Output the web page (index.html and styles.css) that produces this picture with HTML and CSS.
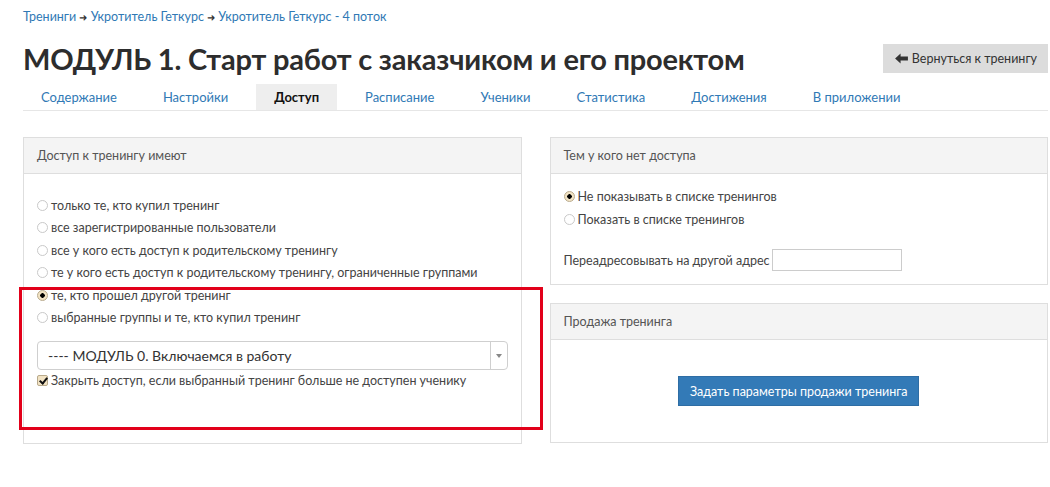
FILE: index.html
```html
<!DOCTYPE html>
<html lang="ru">
<head>
  <meta charset="UTF-8">
  <title>Доступ - МОДУЛЬ 1</title>
  <link rel="stylesheet" href="styles.css">
</head>
<body>
  <div class="page">
    <div class="breadcrumbs">
      <a href="#">Тренинги</a> <span class="sep">&#10140;</span>
      <a href="#">Укротитель Геткурс</a> <span class="sep">&#10140;</span>
      <a href="#">Укротитель Геткурс - 4 поток</a>
    </div>

    <div class="page-header">
      <h1>МОДУЛЬ 1. Старт работ с заказчиком и его проектом</h1>
      <a href="#" class="btn-back">
        <svg class="icon-back" viewBox="0 0 14 12" width="13" height="11"><path d="M0 6 L6 0.5 L6 3.8 L14 3.8 L14 8.2 L6 8.2 L6 11.5 Z" fill="#333"/></svg>
        Вернуться к тренингу
      </a>
    </div>

    <div class="tabs">
      <a href="#" class="tab">Содержание</a>
      <a href="#" class="tab">Настройки</a>
      <a href="#" class="tab active">Доступ</a>
      <a href="#" class="tab">Расписание</a>
      <a href="#" class="tab">Ученики</a>
      <a href="#" class="tab">Статистика</a>
      <a href="#" class="tab">Достижения</a>
      <a href="#" class="tab">В приложении</a>
    </div>

    <div class="columns">
      <div class="panel panel-access">
        <div class="panel-heading">Доступ к тренингу имеют</div>
        <div class="panel-body access-body">
          <label class="radio-row"><input type="radio" name="access"> только те, кто купил тренинг</label>
          <label class="radio-row"><input type="radio" name="access"> все зарегистрированные пользователи</label>
          <label class="radio-row"><input type="radio" name="access"> все у кого есть доступ к родительскому тренингу</label>
          <label class="radio-row"><input type="radio" name="access"> те у кого есть доступ к родительскому тренингу, ограниченные группами</label>
          <label class="radio-row"><input type="radio" name="access" checked> те, кто прошел другой тренинг</label>
          <label class="radio-row"><input type="radio" name="access"> выбранные группы и те, кто купил тренинг</label>

          <div class="select-box">
            <span class="select-text">---- МОДУЛЬ 0. Включаемся в работу</span>
            <span class="select-arrow"><span class="caret"></span></span>
          </div>
          <label class="check-row"><input type="checkbox" checked> Закрыть доступ, если выбранный тренинг больше не доступен ученику</label>
        </div>
        <div class="highlight"></div>
      </div>

      <div class="right-col">
        <div class="panel">
          <div class="panel-heading">Тем у кого нет доступа</div>
          <div class="panel-body noaccess-body">
            <label class="radio-row"><input type="radio" name="noaccess" checked> Не показывать в списке тренингов</label>
            <label class="radio-row"><input type="radio" name="noaccess"> Показать в списке тренингов</label>
            <div class="redirect-row">
              <span>Переадресовывать на другой адрес</span>
              <input type="text" class="redirect-input">
            </div>
          </div>
        </div>

        <div class="panel">
          <div class="panel-heading">Продажа тренинга</div>
          <div class="panel-body sale-body">
            <button class="btn-primary">Задать параметры продажи тренинга</button>
          </div>
        </div>
      </div>
    </div>
  </div>
</body>
</html>
```

FILE: styles.css
```css
body {
  margin: 0;
  font-family: 'Lato', 'Open Sans', sans-serif;
  font-size: 13px;
  color: #444;
  background: #fff;
}

a {
  color: #3079b5;
  text-decoration: none;
}

.page {
  padding: 8px 2px 0 23px;
}

.breadcrumbs {
  font-size: 12.5px;
  line-height: 18px;
}

.breadcrumbs .sep {
  color: #333;
  font-size: 10px;
}

.page-header {
  display: flex;
  justify-content: space-between;
  align-items: center;
  margin-top: 12px;
  height: 40px;
}

.page-header h1 {
  margin: 0;
  font-size: 29px;
  font-weight: 700;
  color: #2d2d2d;
  letter-spacing: -0.2px;
}

.btn-back {
  display: flex;
  align-items: center;
  gap: 4px;
  background-color: #dcdcdc;
  color: #333;
  font-size: 12.5px;
  height: 29px;
  padding: 0 11px 0 12px;
}

.tabs {
  display: flex;
  margin-top: 6px;
  border-bottom: 1px solid #e6e6e6;
}

.tab {
  padding: 0 18px;
  margin-right: 10px;
  line-height: 26px;
  font-size: 13px;
}

.tab.active {
  background-color: #eee;
  color: #111;
  font-weight: 700;
}

.columns {
  display: grid;
  grid-template-columns: 1fr 1fr;
  gap: 28px;
  margin-top: 26px;
  align-items: start;
}

.right-col {
  display: flex;
  flex-direction: column;
  gap: 18px;
}

.panel {
  border: 1px solid #dedede;
  background: #fff;
}

.panel-access {
  position: relative;
}

.panel-heading {
  background-color: #f4f4f4;
  border-bottom: 1px solid #dedede;
  padding: 0 13px;
  line-height: 35px;
  color: #555;
  font-size: 12.5px;
}

.panel-body {
  padding: 0 13px;
}

.access-body {
  padding-top: 20px;
  padding-bottom: 52px;
}

.radio-row,
.check-row {
  display: flex;
  align-items: center;
  gap: 3px;
  height: 22.5px;
  color: #444;
  font-size: 12.5px;
}

.check-row {
  height: 21px;
}

input[type="radio"] {
  appearance: none;
  margin: 0;
  width: 11px;
  height: 11px;
  border-radius: 50%;
  border: 1px solid #c9c9c9;
  background: #fff;
  flex-shrink: 0;
}

input[type="radio"]:checked {
  border-color: #b9aa8c;
  background: radial-gradient(circle, #000 0 2px, #f2e3c4 2.5px);
}

input[type="checkbox"] {
  appearance: none;
  margin: 0;
  width: 11px;
  height: 11px;
  border-radius: 2px;
  border: 1px solid #b9aa8c;
  background: #f2e3c4;
  position: relative;
  flex-shrink: 0;
}

input[type="checkbox"]:checked::after {
  content: "";
  position: absolute;
  left: 3px;
  top: 0;
  width: 3px;
  height: 6px;
  border: solid #111;
  border-width: 0 2px 2px 0;
  transform: rotate(40deg);
}

.select-box {
  display: flex;
  margin-top: 12px;
  height: 27px;
  border: 1px solid #cfcfcf;
  border-radius: 4px;
  align-items: stretch;
}

.select-text {
  flex: 1;
  display: flex;
  align-items: center;
  padding-left: 10px;
  font-size: 14px;
  color: #333;
}

.select-arrow {
  width: 16px;
  border-left: 1px solid #cfcfcf;
  display: flex;
  align-items: center;
  justify-content: center;
}

.caret {
  width: 0;
  height: 0;
  border-left: 3px solid transparent;
  border-right: 3px solid transparent;
  border-top: 4px solid #888;
}

.highlight {
  position: absolute;
  left: -5px;
  top: 149px;
  width: 518px;
  height: 137px;
  border: 3px solid #e2001a;
}

.noaccess-body {
  padding-top: 11px;
  padding-bottom: 13px;
}

.noaccess-body .radio-row {
  height: 23px;
}

.redirect-row {
  display: flex;
  align-items: center;
  gap: 3px;
  margin-top: 18px;
  font-size: 12.5px;
}

.redirect-input {
  width: 126px;
  height: 18px;
  border: 1px solid #ccc;
  padding: 1px;
  margin: 0;
}

.sale-body {
  display: flex;
  justify-content: center;
  padding: 36px 13px;
}

.btn-primary {
  background-color: #337ab7;
  border: 1px solid #2e6da4;
  color: #fff;
  font-family: inherit;
  font-size: 12.5px;
  height: 30px;
  padding: 0 11px;
  cursor: pointer;
}
```
